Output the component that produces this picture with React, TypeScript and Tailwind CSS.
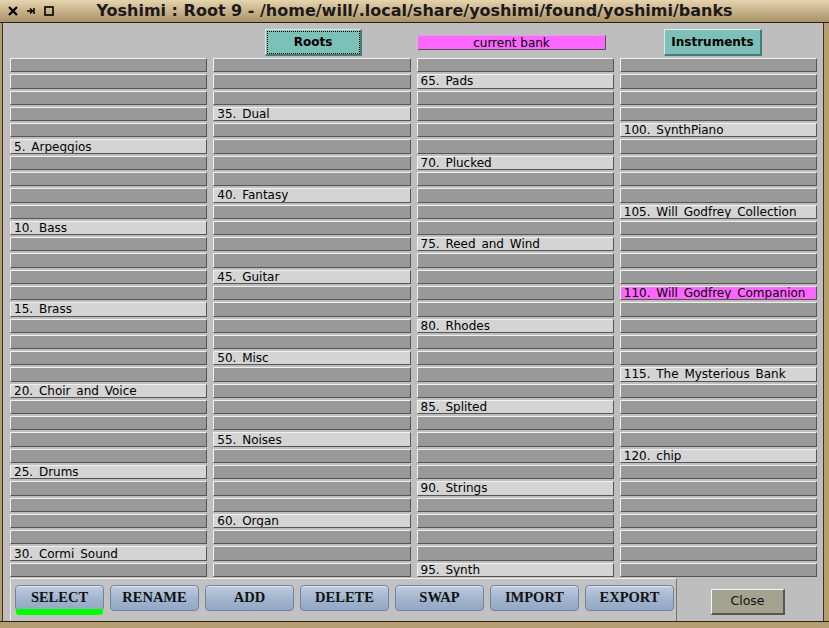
const names: Record<number, string> = {
  5: "5. Arpeggios",
  10: "10. Bass",
  15: "15. Brass",
  20: "20. Choir and Voice",
  25: "25. Drums",
  30: "30. Cormi Sound",
  35: "35. Dual",
  40: "40. Fantasy",
  45: "45. Guitar",
  50: "50. Misc",
  55: "55. Noises",
  60: "60. Organ",
  65: "65. Pads",
  70: "70. Plucked",
  75: "75. Reed and Wind",
  80: "80. Rhodes",
  85: "85. Splited",
  90: "90. Strings",
  95: "95. Synth",
  100: "100. SynthPiano",
  105: "105. Will Godfrey Collection",
  110: "110. Will Godfrey Companion",
  115: "115. The Mysterious Bank",
  120: "120. chip",
};

const current = 110;

const actions = ["SELECT", "RENAME", "ADD", "DELETE", "SWAP", "IMPORT", "EXPORT"];

function Slot({ id }: { id: number }) {
  const name = names[id];
  let bg = "bg-[#999999]";
  if (id === current) bg = "bg-[#ff66ff]";
  else if (name) bg = "bg-[#d4d4d4]";
  return (
    <div
      className={`${bg} border-t border-l border-t-[#f0f0f0] border-l-[#f0f0f0] border-b border-r border-b-[#555555] border-r-[#555555] flex items-center pl-[3px] text-[12px] leading-none text-black whitespace-pre [word-spacing:2px] overflow-hidden`}
    >
      {name ?? ""}
    </div>
  );
}

function TitleIcons() {
  return (
    <div className="flex items-center gap-[9px] pl-[8px]">
      <svg width="10" height="10" viewBox="0 0 10 10">
        <path d="M1 1 L9 9 M9 1 L1 9" stroke="#000" strokeWidth="2.2" />
      </svg>
      <svg width="8" height="8" viewBox="0 0 8 8">
        <path d="M0 4 H5 M3 1.5 L5.5 4 L3 6.5 M7 1 V7" stroke="#000" strokeWidth="1.5" fill="none" />
      </svg>
      <svg width="10" height="10" viewBox="0 0 10 10">
        <rect x="1" y="1" width="8" height="8" stroke="#000" strokeWidth="1.6" fill="none" />
      </svg>
    </div>
  );
}

export default function App() {
  const font = { fontFamily: "'DejaVu Sans', sans-serif" };
  return (
    <div className="w-[829px] h-[628px] bg-[#b59e70] flex flex-col overflow-hidden" style={font}>
      <div className="h-[23px] shrink-0 relative flex items-center bg-gradient-to-b from-[#e6d4ae] to-[#a99268] border-b border-b-[#2a2418]">
        <TitleIcons />
        <div className="absolute inset-0 flex items-center justify-center text-[16px] font-bold text-[#1a1a1a]">
          Yoshimi : Root 9 - /home/will/.local/share/yoshimi/found/yoshimi/banks
        </div>
      </div>
      <div className="flex flex-1 min-h-0">
        <div className="w-[3px] bg-[#b59e70] border-r border-r-[#3a3222]" />
        <div className="flex-1 bg-[#bebebe] flex flex-col">
          <div className="h-[35px] shrink-0 relative flex items-start pt-[6px]">
            <div className="ml-[262px] w-[97px] h-[27px] bg-[#7dc0b8] border-t border-l border-t-[#d8ece8] border-l-[#d8ece8] border-b-2 border-r-2 border-b-[#4a7c76] border-r-[#4a7c76] flex items-center justify-center">
              <div className="w-[93px] h-[23px] border border-dotted border-black flex items-center justify-center text-[12px] font-bold">
                Roots
              </div>
            </div>
            <div className="ml-[56px] mt-[6px] w-[188px] h-[15px] bg-[#ff66ff] border-b border-r border-b-[#555] border-r-[#555] border-t border-t-[#e0a0e0] flex items-center justify-center text-[12px] leading-none">
              current bank
            </div>
            <div className="ml-[58px] w-[98px] h-[27px] bg-[#7dc0b8] border-t border-l border-t-[#d8ece8] border-l-[#d8ece8] border-b-2 border-r-2 border-b-[#4a7c76] border-r-[#4a7c76] flex items-center justify-center text-[12px] font-bold">
              Instruments
            </div>
          </div>
          <div className="ml-[7px] w-[807px] h-[519px] shrink-0 grid grid-cols-4 gap-x-[6px]">
            {[0, 1, 2, 3].map((c) => (
              <div key={c} className="grid grid-rows-[repeat(32,1fr)] gap-y-[2px]">
                {Array.from({ length: 32 }, (_, r) => (
                  <Slot key={r} id={c * 32 + r} />
                ))}
              </div>
            ))}
          </div>
          <div className="flex items-start flex-1 pt-[1px]">
            <div className="ml-[7px] w-[667px] h-[44px] border-t border-l border-t-[#eeeeee] border-l-[#eeeeee] border-r border-r-[#777] bg-[#c2c2c2] flex gap-[6px] pl-[4px] pt-[6px]">
              {actions.map((a, i) => (
                <div key={a} className="flex flex-col w-[89px]">
                  <div className="h-[26px] rounded-[4px] border border-[#6f84a3] bg-gradient-to-b from-[#c0cee0] via-[#a3b6cf] to-[#93a8c4] shadow-[inset_0_1px_0_#dfe7f1] flex items-center justify-center font-bold text-[14.5px] text-[#111]" style={{ fontFamily: "'Liberation Serif', serif" }}>
                    {a}
                  </div>
                  {i === 0 && <div className="mx-[1px] -mt-[2px] h-[6px] bg-[#00ff00] rounded-b-[3px]" />}
                </div>
              ))}
            </div>
            <div className="ml-[34px] mt-[11px] w-[74px] h-[26px] bg-[#a3a38f] border-t border-l border-t-[#f4f4f4] border-l-[#f4f4f4] border-b-2 border-r-2 border-b-[#555] border-r-[#555] flex items-center justify-center text-[12.5px] text-[#111]">
              Close
            </div>
          </div>
        </div>
        <div className="w-[6px] bg-[#b59e70] border-l border-l-[#3a3222]" />
      </div>
      <div className="h-[7px] shrink-0 bg-[#b59e70] border-t border-t-[#2a2418]" />
    </div>
  );
}
